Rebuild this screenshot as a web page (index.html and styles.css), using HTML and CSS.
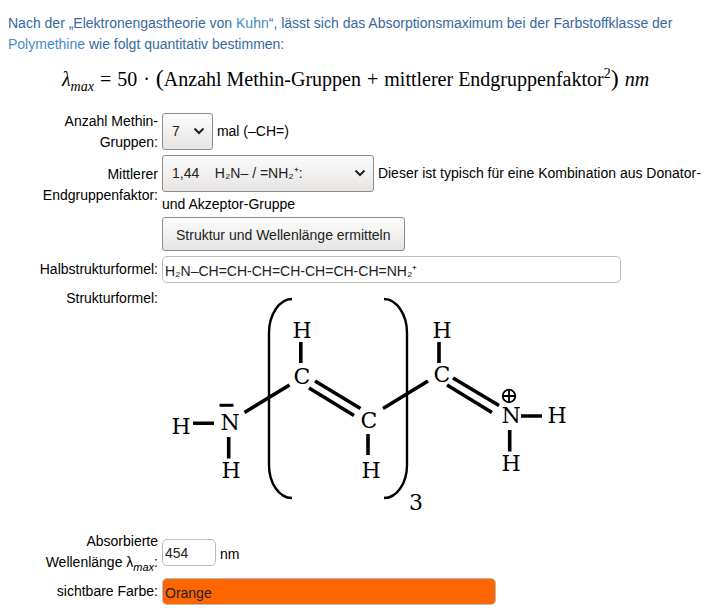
FILE: index.html
```html
<!DOCTYPE html>
<html lang="de">
<head>
<meta charset="utf-8">
<title>Polymethine</title>
<link rel="stylesheet" href="styles.css">
</head>
<body>
<main>
<p class="intro">Nach der „Elektronengastheorie von <a href="#kuhn">Kuhn</a>“, lässt sich das Absorptionsmaximum bei der Farbstoffklasse der <a href="#polymethine">Polymethine</a> wie folgt quantitativ bestimmen:</p>
<div class="formula">
  <span><i>λ<sub>max</sub></i></span>
  <span>=</span>
  <span>50</span>
  <span>·</span>
  <span><span class="paren">(</span>Anzahl Methin-Gruppen</span>
  <span>+</span>
  <span>mittlerer Endgruppenfaktor<sup>2</sup><span class="paren">)</span></span>
  <span><i>nm</i></span>
</div>
<form class="form">
  <label for="count">Anzahl Methin-Gruppen:</label>
  <div class="field">
    <span class="select select-small">
      <select id="count"><option>7</option></select>
      <svg class="chevron" viewBox="0 0 12 8" aria-hidden="true"><path d="M1.5 1.5 6 6l4.5-4.5"/></svg>
    </span>
    mal (–CH=)
  </div>

  <label for="factor">Mittlerer Endgruppenfaktor:</label>
  <div class="field">
    <span class="select select-wide">
      <select id="factor"><option>1,44 &nbsp;&nbsp; H₂N– / =NH₂⁺:</option></select>
      <svg class="chevron" viewBox="0 0 12 8" aria-hidden="true"><path d="M1.5 1.5 6 6l4.5-4.5"/></svg>
    </span>
    Dieser ist typisch für eine Kombination aus Donator- und Akzeptor-Gruppe
  </div>

  <div class="field action"><button type="button">Struktur und Wellenlänge ermitteln</button></div>

  <label for="half">Halbstrukturformel:</label>
  <div class="field"><input class="input-long" id="half" type="text" value="H₂N–CH=CH-CH=CH-CH=CH-CH=NH₂⁺"></div>

  <span class="caption">Strukturformel:</span>
  <div class="field">
    <svg class="structure" viewBox="162 288 410 241" role="img" aria-label="Strukturformel">
      <g class="bracket">
        <path d="M292 299C279 299 269 315 269 333V465C269 483 279 498 292 498"/>
        <path d="M384 299C397 299 407 315 407 333V465C407 483 397 498 384 498"/>
      </g>
      <g class="bond">
        <path d="M193 423.3H214M228.7 437V458.5M244.500 412.5 289.5 385"/>
        <path d="M300.8 342V363M315 381 360.5 408.5M309 388 354 415.5"/>
        <path d="M368 434V455M383 408.5 428 381"/>
        <path d="M439 342V363M453 378 499 405.5M447 385 492 412.5"/>
        <path d="M521 416H542M509.7 430V451.5"/>
      </g>
      <path class="pair" d="M219.5 405.3H233.5"/>
      <g class="charge"><circle cx="509" cy="396" r="6.3"/><path d="M502.7 396H515.3M509 389.7V402.3"/></g>
      <g class="atom">
        <text x="181" y="434">H</text>
        <text x="230" y="430">N</text>
        <text x="231" y="478">H</text>
        <text x="302" y="338">H</text>
        <text x="302" y="384">C</text>
        <text x="369" y="428">C</text>
        <text x="371" y="478">H</text>
        <text x="416" y="510">3</text>
        <text x="442" y="338">H</text>
        <text x="442" y="382">C</text>
        <text x="511" y="423">N</text>
        <text x="557" y="423">H</text>
        <text x="511" y="471">H</text>
      </g>
    </svg>
  </div>

  <label for="wave">Absorbierte Wellenlänge λ<sub><i>max</i></sub>:</label>
  <div class="field"><input class="input-short" id="wave" type="text" value="454"> nm</div>

  <label for="colour">sichtbare Farbe:</label>
  <div class="field"><input class="input-colour" id="colour" type="text" value="Orange"></div>
</form>
</main>
</body>
</html>
```

FILE: styles.css
```css
* { box-sizing: border-box; }
body {
  margin: 0;
  padding: 13px 8px 8px;
  background: #fff;
  color: #000;
  font: 14px/21px "Liberation Sans", Arial, sans-serif;
}
.intro { margin: 0; color: #36699f; }
a { color: #428bca; text-decoration: none; }

.formula {
  display: flex;
  flex-wrap: wrap;
  justify-content: center;
  gap: 6px;
  padding: 6px 0 14px;
  font: 20px/36px "Liberation Serif", serif;
}
.formula sub, .formula sup { font-size: 14px; line-height: 0; }
.paren { font-size: 24px; line-height: 0; }

.form {
  display: grid;
  grid-template-columns: 150px 1fr;
  gap: 2px 4px;
  align-items: center;
}
.form > label, .caption { text-align: right; }
.caption { align-self: start; }
.action { grid-column: 2; }
sub { line-height: 0; font-size: 11px; }

.select { position: relative; display: inline-block; margin-bottom: 2px; }
.select-small { width: 51px; }
.select-wide { width: 212px; }
select, button {
  border: 1px solid #8b8b8b;
  border-radius: 3px;
  background: linear-gradient(#fcfcfc, #e7e5e3);
  color: #222;
  font: inherit;
}
select {
  display: block;
  appearance: none;
  width: 100%;
  height: 37px;
  padding: 0 9px;
}
.chevron {
  position: absolute;
  top: 14px;
  right: 8px;
  width: 12px;
  height: 8px;
  fill: none;
  stroke: #222;
  stroke-width: 2;
  pointer-events: none;
}
button { display: block; height: 34px; padding: 2px 13px 0; }

input {
  width: 100%;
  height: 27px;
  margin: 3px 0;
  padding: 4px 2px 2px;
  border: 1px solid #bbb;
  border-radius: 5px;
  background: #fff;
  color: #222;
  font: inherit;
}
.input-long { display: block; max-width: 459px; }
.input-short { max-width: 54px; }
.input-colour { display: block; max-width: 334px; background: #f60; }

.structure { display: block; width: 100%; max-width: 410px; }
.bracket { fill: none; stroke: #000; stroke-width: 2.4; }
.bond { fill: none; stroke: #000; stroke-width: 3.6; }
.pair { stroke: #000; stroke-width: 3; }
.charge { fill: none; stroke: #000; stroke-width: 1.8; }
.atom { font: 22px "DejaVu Serif", serif; text-anchor: middle; }
```
